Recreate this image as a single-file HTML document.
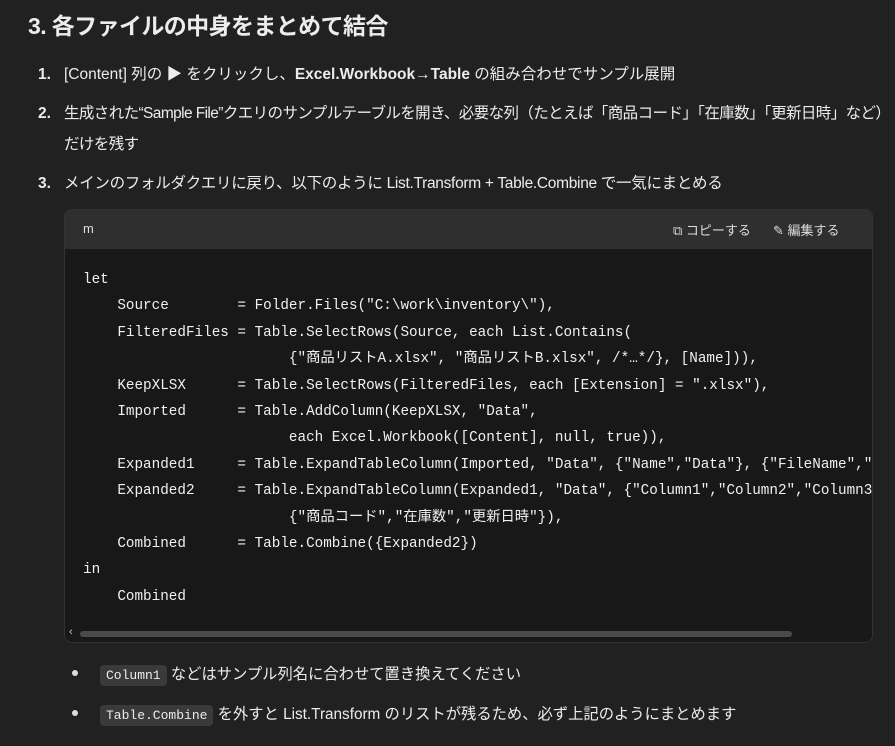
<!DOCTYPE html>
<html><head><meta charset="utf-8"><style>
html,body{margin:0;padding:0;background:#212121;width:895px;height:746px;overflow:hidden;}
body{font-family:"Liberation Sans","Noto Sans CJK JP",sans-serif;color:#ececec;position:relative;}
.t{position:absolute;left:28px;top:7px;font-size:23px;font-weight:bold;white-space:nowrap;letter-spacing:-0.6px;}
.li{position:absolute;left:64px;font-size:15.5px;white-space:nowrap;line-height:31px;}
.n{position:absolute;left:-26px;font-weight:bold;}
b{font-weight:bold;}
.cb{position:absolute;left:64px;top:209px;width:807px;height:432px;border:1px solid #333;border-radius:8px;background:#181818;overflow:hidden;}
.hd{height:39px;background:#2f2f2f;position:relative;font-size:13px;color:#ddd;}
.hd .l{position:absolute;left:18px;top:11px;font-family:"Liberation Sans",sans-serif;}
.hd .r{position:absolute;top:10px;white-space:nowrap;}
pre{position:absolute;left:18px;top:57px;margin:0;font-family:"Liberation Mono","Noto Sans CJK JP",monospace;font-size:14.3px;line-height:26.4px;color:#f0f0f0;}
.sb{position:absolute;left:15px;top:421px;width:712px;height:6px;border-radius:3px;background:#4a4a4a;}
.bl{position:absolute;left:100px;font-size:15.3px;white-space:nowrap;}
.dot{position:absolute;left:-28px;top:8px;width:6px;height:6px;border-radius:50%;background:#ddd;}
code{font-family:"Liberation Mono",monospace;font-size:13px;background:#3a3a3a;border-radius:4px;padding:3px 6px;}
</style></head><body>
<div class="t">3. 各ファイルの中身をまとめて結合</div>
<div class="li" style="top:59px"><span class="n">1.</span>[Content] 列の ▶ をクリックし、<b>Excel.Workbook→Table</b> の組み合わせでサンプル展開</div>
<div class="li" style="top:98px;letter-spacing:-0.6px"><span class="n" style="letter-spacing:0">2.</span>生成された“Sample File”クエリのサンプルテーブルを開き、必要な列（たとえば「商品コード」「在庫数」「更新日時」など）<br>だけを残す</div>
<div class="li" style="top:168px;letter-spacing:-0.3px"><span class="n" style="letter-spacing:0">3.</span>メインのフォルダクエリに戻り、以下のように List.Transform + Table.Combine で一気にまとめる</div>
<div class="cb">
<div class="hd"><span class="l">m</span><span class="r" style="left:608px">⧉ コピーする</span><span class="r" style="left:708px">✎ 編集する</span></div>
<pre>let
    Source        = Folder.Files("C:\work\inventory\"),
    FilteredFiles = Table.SelectRows(Source, each List.Contains(
                        {"商品リストA.xlsx", "商品リストB.xlsx", /*…*/}, [Name])),
    KeepXLSX      = Table.SelectRows(FilteredFiles, each [Extension] = ".xlsx"),
    Imported      = Table.AddColumn(KeepXLSX, "Data",
                        each Excel.Workbook([Content], null, true)),
    Expanded1     = Table.ExpandTableColumn(Imported, "Data", {"Name","Data"}, {"FileName","Data"}),
    Expanded2     = Table.ExpandTableColumn(Expanded1, "Data", {"Column1","Column2","Column3"},
                        {"商品コード","在庫数","更新日時"}),
    Combined      = Table.Combine({Expanded2})
in
    Combined</pre>
<div style="position:absolute;left:4px;top:416px;font-size:11px;color:#ccc">‹</div>
<div class="sb"></div>
</div>
<div class="bl" style="top:662px"><span class="dot"></span><code>Column1</code> などはサンプル列名に合わせて置き換えてください</div>
<div class="bl" style="top:702px"><span class="dot"></span><code>Table.Combine</code> を外すと List.Transform のリストが残るため、必ず上記のようにまとめます</div>
</body></html>
